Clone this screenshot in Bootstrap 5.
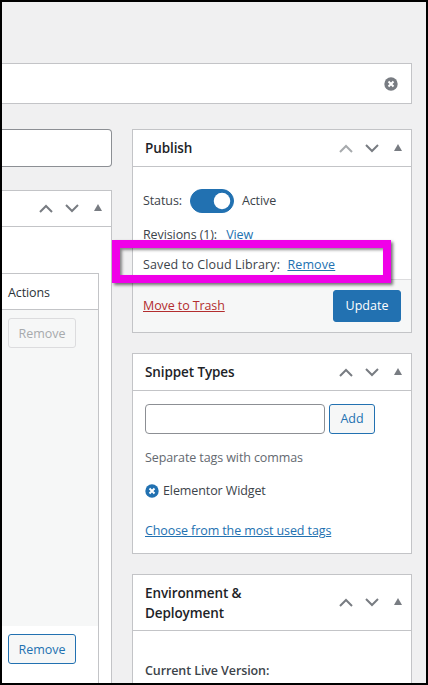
<!DOCTYPE html>
<html lang="en">
<head>
<meta charset="utf-8">
<title>Snippet editor</title>
<link rel="stylesheet" href="https://cdn.jsdelivr.net/npm/bootstrap@5.3.0/dist/css/bootstrap.min.css">
<style>
html,body{margin:0;height:685px;overflow:hidden;background:#fff}
body{font-family:"Open Sans","Noto Sans",sans-serif;font-size:12.5px;letter-spacing:-.1px;color:#3c434a;line-height:20px}
.frame{width:428px;height:685px;border:2px solid #000;background:#f0f0f1;overflow:hidden;padding-top:61px}
.titlebar{height:41px;margin-right:14px;background:#fff;border:1px solid #c3c4c7;border-left:0;padding-right:13px}
.cols{margin-top:25px;margin-right:14px;gap:20px}
.leftcol{width:110px;flex:none}
.rightcol{width:280px;flex:none}
.permabox{height:38px;background:#fff;border:1px solid #8c8f94;border-left:0;border-radius:0 4px 4px 0}
.metabox{border-radius:0;border-color:#c3c4c7;background:#fff;--bs-card-inner-border-radius:0}
.metabox .card-header{background:#fff;border-color:#c3c4c7;border-radius:0;padding:0 9px 0 12px;height:37px;font-size:13.5px;letter-spacing:-.1px;font-weight:600;color:#1d2327;line-height:20px}
.metabox .card-body{padding:0}
.leftbox{margin-top:23px;border-left:0;height:600px}
.metabox.leftbox .card-header{height:36px}
.handles{gap:12px;margin-left:auto}
.handles svg{display:block}
.handles .tri{margin-left:3px;margin-top:-2px}
.fieldtable{margin:46px 12px 0 0;border:1px solid #c3c4c7;border-left:0;background:#fff}
.fieldhead{height:36px;padding:9px 0 0 6px;border-bottom:1px solid #c3c4c7;color:#2c3338}
.fieldrow{height:316px;background:#f6f7f7;padding:8px 0 0 6px}
.fieldrow2{padding:8px 0 0 6px;height:120px}
.wpbtn{--bs-btn-padding-x:0;--bs-btn-padding-y:0;--bs-btn-font-size:12.5px;--bs-btn-line-height:28px;--bs-btn-border-radius:3px;--bs-btn-color:#2271b1;--bs-btn-bg:#f6f7f7;--bs-btn-border-color:#2271b1;--bs-btn-hover-color:#2271b1;--bs-btn-hover-bg:#f6f7f7;--bs-btn-hover-border-color:#2271b1;--bs-btn-disabled-color:#a7aaad;--bs-btn-disabled-bg:#f6f7f7;--bs-btn-disabled-border-color:#dcdcde;--bs-btn-disabled-opacity:1;height:30px;display:block}
.rm{width:68px;--bs-btn-line-height:30px}
.metabox .publishbody{padding:22px 10px 0;height:112px;position:relative}
.statusline{height:24px;line-height:24px;margin-bottom:11px}
.form-check-input.wpswitch{width:44px;height:24px;margin:0 8px;background-color:#2271b1;border-color:#2271b1;float:none;flex:none}
.pubrow{height:20px;padding-top:1px;margin-bottom:10px}
.pubrow a,.tagslink{color:#2271b1}
.pubrow .plain{text-decoration:none;margin-left:6px}
.savedrow{letter-spacing:.12px}
.savedrow a{margin-left:4px}
.boldlabel{font-weight:600}
.highlight{position:absolute;left:-21px;top:73px;width:279px;height:43px;border:8px solid #f000e8;box-shadow:2px 2px 3px rgba(0,0,0,.55),inset 2px 2px 3px rgba(0,0,0,.45);pointer-events:none}
.metabox .publishfoot{background:#f6f7f7;border-color:#dcdcde;border-radius:0;padding:10px 10px 0;height:53px}
.trash{color:#b32d2e;margin-top:6px}
.updatebtn{--bs-btn-padding-x:0;--bs-btn-padding-y:0;--bs-btn-font-size:12.5px;--bs-btn-line-height:30px;--bs-btn-border-radius:3px;--bs-btn-bg:#2271b1;--bs-btn-border-color:#2271b1;--bs-btn-color:#fff;--bs-btn-hover-bg:#2271b1;--bs-btn-hover-border-color:#2271b1;--bs-btn-hover-color:#fff;width:68px;height:32px}
.boxgap{margin-top:20px}
.metabox .tagsbody{padding:13px 12px 0;height:162px}
.taginput{width:180px;height:30px;border:1px solid #8c8f94;border-radius:4px;padding:0 8px;font-size:13px;flex:none}
.addbtn{width:46px}
.hint{color:#646970;margin-top:14px}
.tagitem{margin-top:13px;gap:4px}
.tagslink{display:block;margin-top:20px}
.metabox.envbox .card-header{height:56px;line-height:20px}
.metabox .envbody{padding:30px 12px 0;height:80px}
</style>
</head>
<body>
<div class="frame">
  <div class="titlebar d-flex align-items-center justify-content-end">
    <svg width="14" height="14" viewBox="0 0 14 14" aria-hidden="true"><circle cx="7" cy="7" r="6.7" fill="#787c82"/><path d="M4.5 4.5l5 5M9.5 4.5l-5 5" stroke="#fff" stroke-width="2" fill="none"/></svg>
  </div>
  <div class="cols d-flex align-items-start">
    <div class="leftcol">
      <div class="permabox"></div>
      <div class="card metabox leftbox">
        <div class="card-header d-flex align-items-center">
          <div class="handles d-flex align-items-center">
            <svg width="14" height="9" viewBox="0 0 14 9"><path d="M1 8l6-6 6 6" fill="none" stroke="#787c82" stroke-width="2"/></svg>
            <svg width="14" height="9" viewBox="0 0 14 9"><path d="M1 1l6 6 6-6" fill="none" stroke="#787c82" stroke-width="2"/></svg>
            <svg class="tri" width="8" height="7" viewBox="0 0 8 7"><path d="M4 0l4 7H0z" fill="#787c82"/></svg>
          </div>
        </div>
        <div class="card-body">
          <div class="fieldtable">
            <div class="fieldhead">Actions</div>
            <div class="fieldrow"><button class="btn wpbtn rm" type="button" disabled>Remove</button></div>
            <div class="fieldrow2"><button class="btn wpbtn rm" type="button">Remove</button></div>
          </div>
        </div>
      </div>
    </div>
    <div class="rightcol">
      <div class="card metabox">
        <div class="card-header d-flex align-items-center">Publish
          <div class="handles d-flex align-items-center">
            <svg width="14" height="9" viewBox="0 0 14 9"><path d="M1 8l6-6 6 6" fill="none" stroke="#a7aaad" stroke-width="2"/></svg>
            <svg width="14" height="9" viewBox="0 0 14 9"><path d="M1 1l6 6 6-6" fill="none" stroke="#787c82" stroke-width="2"/></svg>
            <svg class="tri" width="8" height="7" viewBox="0 0 8 7"><path d="M4 0l4 7H0z" fill="#787c82"/></svg>
          </div>
        </div>
        <div class="card-body publishbody">
          <div class="statusline form-switch d-flex align-items-center p-0">
            <span>Status:</span>
            <input class="form-check-input wpswitch" type="checkbox" role="switch" checked aria-label="Status">
            <span>Active</span>
          </div>
          <div class="pubrow">Revisions (1): <a class="plain" href="#">View</a></div>
          <div class="pubrow savedrow">Saved to Cloud Library: <a href="#">Remove</a></div>
          <div class="highlight"></div>
        </div>
        <div class="card-footer publishfoot d-flex justify-content-between align-items-start">
          <a class="trash" href="#">Move to Trash</a>
          <button class="btn updatebtn" type="button">Update</button>
        </div>
      </div>
      <div class="card metabox boxgap">
        <div class="card-header d-flex align-items-center">Snippet Types
          <div class="handles d-flex align-items-center">
            <svg width="14" height="9" viewBox="0 0 14 9"><path d="M1 8l6-6 6 6" fill="none" stroke="#787c82" stroke-width="2"/></svg>
            <svg width="14" height="9" viewBox="0 0 14 9"><path d="M1 1l6 6 6-6" fill="none" stroke="#787c82" stroke-width="2"/></svg>
            <svg class="tri" width="8" height="7" viewBox="0 0 8 7"><path d="M4 0l4 7H0z" fill="#787c82"/></svg>
          </div>
        </div>
        <div class="card-body tagsbody">
          <div class="d-flex gap-1">
            <input class="taginput" type="text" aria-label="Add tag">
            <button class="btn wpbtn addbtn" type="button">Add</button>
          </div>
          <div class="hint">Separate tags with commas</div>
          <div class="tagitem d-flex align-items-center">
            <svg width="14" height="14" viewBox="0 0 14 14" aria-hidden="true"><circle cx="7" cy="7" r="6.7" fill="#2271b1"/><path d="M4.5 4.5l5 5M9.5 4.5l-5 5" stroke="#fff" stroke-width="2" fill="none"/></svg>
            <span>Elementor Widget</span>
          </div>
          <a class="tagslink" href="#">Choose from the most used tags</a>
        </div>
      </div>
      <div class="card metabox boxgap envbox">
        <div class="card-header d-flex align-items-center">
          <span>Environment &amp;<br>Deployment</span>
          <div class="handles d-flex align-items-center">
            <svg width="14" height="9" viewBox="0 0 14 9"><path d="M1 8l6-6 6 6" fill="none" stroke="#787c82" stroke-width="2"/></svg>
            <svg width="14" height="9" viewBox="0 0 14 9"><path d="M1 1l6 6 6-6" fill="none" stroke="#787c82" stroke-width="2"/></svg>
            <svg class="tri" width="8" height="7" viewBox="0 0 8 7"><path d="M4 0l4 7H0z" fill="#787c82"/></svg>
          </div>
        </div>
        <div class="card-body envbody"><span class="boldlabel">Current Live Version:</span></div>
      </div>
    </div>
  </div>
</div>
</body>
</html>
